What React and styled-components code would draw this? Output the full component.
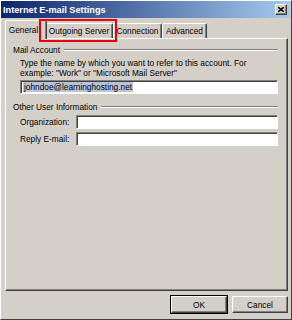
import React from "react";
import styled, { createGlobalStyle } from "styled-components";

const Global = createGlobalStyle`
  html, body {
    margin: 0;
    padding: 0;
    background: #d4d0c8;
  }
  body {
    font-family: "Liberation Sans", Arial, sans-serif;
    font-size: 8.3px;
    color: #000;
  }
`;

const Window = styled.div`
  width: 292px;
  height: 320px;
  box-sizing: border-box;
  display: flex;
  flex-direction: column;
  background: #d4d0c8;
  border-left: 1px solid #fff;
  border-top: 1px solid #fff;
  border-right: 1px solid #404040;
  border-bottom: 1px solid #404040;
`;

const TitleBar = styled.div`
  height: 17px;
  margin: 0 1px 0 0;
  display: flex;
  align-items: center;
  justify-content: space-between;
  padding: 0 3px 0 2px;
  background: linear-gradient(to right, #0a246a, #a6caf0);
  color: #fff;
  font-weight: bold;
  font-size: 9.2px;
`;

const CloseButton = styled.div`
  width: 12px;
  height: 11px;
  box-sizing: border-box;
  background: #d4d0c8;
  border-left: 1px solid #fff;
  border-top: 1px solid #fff;
  border-right: 1px solid #404040;
  border-bottom: 1px solid #404040;
  box-shadow: inset -1px -1px 0 #808080;
  display: flex;
  align-items: center;
  justify-content: center;
`;

const Body = styled.div`
  flex: 1;
  display: flex;
  flex-direction: column;
  padding: 2px 3px 6px 4px;
`;

const TabStrip = styled.div`
  position: relative;
  display: flex;
  align-items: flex-end;
  height: 18px;
  padding-left: 2px;
`;

const Tab = styled.div`
  box-sizing: border-box;
  width: ${(p) => p.$w}px;
  height: ${(p) => (p.$active ? 19 : 15)}px;
  margin: ${(p) => (p.$active ? "0 -2px -1px -2px" : "0")};
  padding: ${(p) => (p.$active ? "4px 5px 0 0" : "2px 0 0 0")};
  text-align: center;
  white-space: nowrap;
  background: #d4d0c8;
  border-left: 1px solid #fff;
  border-top: 1px solid #fff;
  border-right: 1px solid #404040;
  border-top-left-radius: 2px;
  border-top-right-radius: 2px;
  box-shadow: inset -1px 0 0 #808080;
  z-index: ${(p) => (p.$active ? 2 : 1)};
`;

const Highlight = styled.div`
  position: absolute;
  left: 34px;
  top: -1px;
  width: 78px;
  height: 23px;
  box-sizing: border-box;
  border: 2px solid #e8000c;
  z-index: 3;
`;

const Panel = styled.div`
  flex: 1;
  box-sizing: border-box;
  border-left: 1px solid #fff;
  border-top: 1px solid #fff;
  border-right: 1px solid #404040;
  border-bottom: 1px solid #404040;
  box-shadow: inset -1px -1px 0 #808080;
  padding: 5px 9px 0 7px;
`;

const Group = styled.div`
  margin-bottom: 7px;
`;

const GroupTitle = styled.div`
  display: flex;
  align-items: center;
  gap: 4px;
  height: 12px;
  &::after {
    content: "";
    flex: 1;
    height: 0;
    border-top: 1px solid #808080;
    border-bottom: 1px solid #fff;
  }
`;

const GroupBody = styled.div`
  padding: 2px 0 0 7px;
`;

const Note = styled.div`
  line-height: 10px;
  margin-bottom: 2px;
`;

const Field = styled.div`
  box-sizing: border-box;
  height: 14px;
  background: #fff;
  border-left: 1px solid #808080;
  border-top: 1px solid #808080;
  border-right: 1px solid #fff;
  border-bottom: 1px solid #fff;
  box-shadow: inset 1px 1px 0 #404040;
  display: flex;
  align-items: center;
  padding-left: 2px;
  flex: ${(p) => (p.$grow ? 1 : "none")};
`;

const Selected = styled.span`
  background: #b9c4dc;
  padding: 0 1px;
  line-height: 10px;
`;

const Row = styled.div`
  display: flex;
  align-items: center;
  margin-bottom: 3px;
`;

const Label = styled.div`
  width: 56px;
`;

const Footer = styled.div`
  display: flex;
  justify-content: flex-end;
  gap: 5px;
  padding-top: 5px;
`;

const Button = styled.div`
  box-sizing: border-box;
  width: 56px;
  height: 17px;
  display: flex;
  align-items: center;
  justify-content: center;
  background: #d4d0c8;
  border-left: 1px solid #fff;
  border-top: 1px solid #fff;
  border-right: 1px solid #404040;
  border-bottom: 1px solid #404040;
  box-shadow: inset -1px -1px 0 #808080;
  outline: ${(p) => (p.$default ? "1px solid #000" : "none")};
`;

export default function App() {
  return (
    <>
      <Global />
      <Window>
        <TitleBar>
          <span>Internet E-mail Settings</span>
          <CloseButton>
            <svg width="6" height="5" viewBox="0 0 6 5">
              <path d="M0 0L6 5M6 0L0 5" stroke="#000" strokeWidth="1.5" />
            </svg>
          </CloseButton>
        </TitleBar>
        <Body>
          <TabStrip>
            <Tab $active $w={42}>General</Tab>
            <Tab $w={68}>Outgoing Server</Tab>
            <Tab $w={49}>Connection</Tab>
            <Tab $w={45}>Advanced</Tab>
            <Highlight />
          </TabStrip>
          <Panel>
            <Group>
              <GroupTitle>Mail Account</GroupTitle>
              <GroupBody>
                <Note>
                  Type the name by which you want to refer to this account. For
                  <br />
                  example: "Work" or "Microsoft Mail Server"
                </Note>
                <Field>
                  <Selected>johndoe@learninghosting.net</Selected>
                </Field>
              </GroupBody>
            </Group>
            <Group>
              <GroupTitle>Other User Information</GroupTitle>
              <GroupBody>
                <Row>
                  <Label>Organization:</Label>
                  <Field $grow />
                </Row>
                <Row>
                  <Label>Reply E-mail:</Label>
                  <Field $grow />
                </Row>
              </GroupBody>
            </Group>
          </Panel>
          <Footer>
            <Button $default>OK</Button>
            <Button>Cancel</Button>
          </Footer>
        </Body>
      </Window>
    </>
  );
}
